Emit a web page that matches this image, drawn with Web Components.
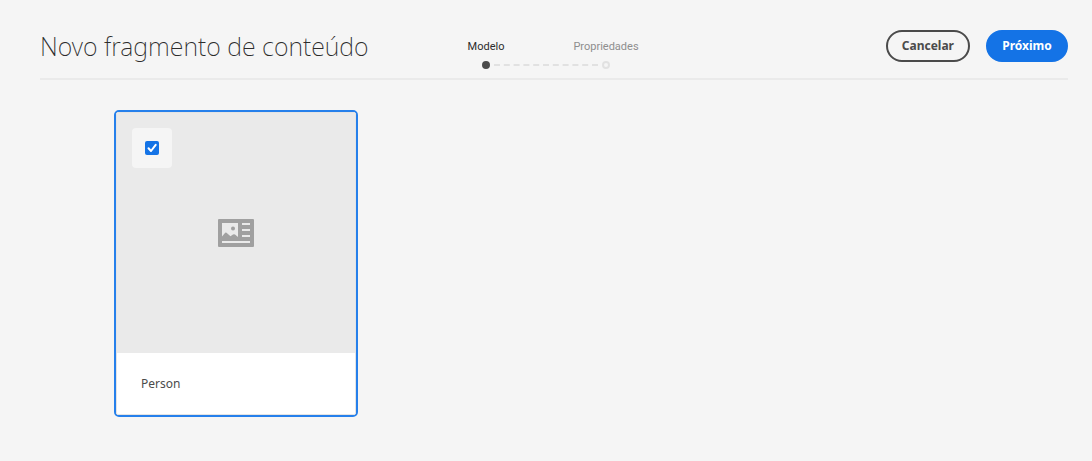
<!DOCTYPE html>
<html lang="pt-BR">
<head>
<meta charset="utf-8">
<meta name="viewport" content="width=device-width, initial-scale=1">
<title>Novo fragmento de conteúdo</title>
<style>
html { background: #f5f5f5; }
body { margin: 0; color: #4b4b4b; font: 12px/16px "Noto Sans", sans-serif; }
</style>
</head>
<body>
<wizard-page></wizard-page>
<script>
const define = (name, html) => customElements.define(name, class extends HTMLElement {
  constructor() {
    super();
    this.attachShadow({ mode: "open" }).innerHTML = html;
  }
});

define("wizard-step", `
<style>
  :host { display: grid; justify-items: center; row-gap: 6px; position: relative; color: #8e8e8e; font: 11px/16px Roboto, sans-serif; }
  :host([current]) { color: #2c2c2c; }
  i { box-sizing: border-box; width: 8px; height: 8px; border-radius: 50%; border: 2px solid #e1e1e1; }
  :host([current]) i { border-color: #4b4b4b; background: #4b4b4b; }
  :host([current])::after { content: ""; position: absolute; bottom: 3px; left: calc(50% + 8px); width: calc(100% - 16px); border-bottom: 2px dashed #e1e1e1; }
</style>
<span><slot></slot></span><i></i>`);

define("wizard-button", `
<style>
  :host { display: block; }
  button { box-sizing: border-box; height: 32px; min-width: 82px; padding: 0 14px; border: 2px solid #4b4b4b; border-radius: 16px; background: transparent; color: #4b4b4b; font: 700 12px/16px "Noto Sans", sans-serif; white-space: nowrap; }
  :host([primary]) button { border-color: #1473e6; background: #1473e6; color: #fff; }
</style>
<button type="button"><slot></slot></button>`);

define("wizard-header", `
<style>
  :host { display: grid; grid-template-columns: minmax(0, 1fr) 256px minmax(0, 1fr); margin: 0 24px 0 40px; padding: 30px 0 9px; border-bottom: 2px solid #eaeaea; }
  h1 { margin: 0; font: 200 25px/32px "Noto Sans", sans-serif; color: #2c2c2c; white-space: nowrap; }
  ol { display: grid; grid-template-columns: 1fr 1fr; margin: 0; padding: 9px 16px 0 0; list-style: none; align-content: start; }
  div { display: flex; justify-content: flex-end; gap: 16px; }
</style>
<h1>Novo fragmento de conteúdo</h1>
<ol>
  <li><wizard-step current>Modelo</wizard-step></li>
  <li><wizard-step>Propriedades</wizard-step></li>
</ol>
<div><wizard-button>Cancelar</wizard-button><wizard-button primary>Próximo</wizard-button></div>`);

define("model-card", `
<style>
  :host { display: block; box-sizing: border-box; width: 244px; border: 2px solid #2680eb; border-radius: 5px; background: #fff; }
  article { border: 1px solid #e4e4e4; border-radius: 2px; }
  .preview { position: relative; display: grid; place-items: center; height: 240px; background: #eaeaea; }
  .pick { position: absolute; top: 15px; left: 15px; display: grid; place-items: center; width: 40px; height: 40px; border-radius: 4px; background: #f5f5f5; }
  .pick > * { grid-area: 1 / 1; }
  input { appearance: none; margin: 0; width: 14px; height: 14px; border-radius: 2px; background: #1473e6; }
  .tick { position: relative; pointer-events: none; visibility: hidden; }
  input:checked + .tick { visibility: visible; }
  h2 { margin: 0; padding: 22px 24px; font: 400 12px/17px "Noto Sans", sans-serif; color: #4b4b4b; }
</style>
<article>
  <div class="preview">
    <label class="pick">
      <input type="checkbox" checked aria-labelledby="name">
      <svg class="tick" width="14" height="14" viewBox="0 0 14 14" aria-hidden="true"><path d="M3.5 7.3 6 10l4.7-6.2" fill="none" stroke="#fff" stroke-width="2" stroke-linecap="round" stroke-linejoin="round"/></svg>
    </label>
    <svg width="36" height="28" viewBox="0 0 36 28" aria-hidden="true">
      <rect width="36" height="28" rx="1" fill="#a0a0a0"/>
      <path d="M4 4h16v14l-3-2.500q-1-.6-2 0l-2.500 1.800-4-3.600q-.7-.6-1.300 0L4 17.500zM24 4h8v2h-8zM24 10h8v2h-8zM24 16h8v2h-8zM4 22h28v2H4z" fill="#eaeaea"/>
      <circle cx="15" cy="9.500" r="2" fill="#a0a0a0"/>
    </svg>
  </div>
  <h2 id="name"><slot></slot></h2>
</article>`);

define("wizard-page", `
<style>
  :host { display: block; }
  main { display: flex; flex-wrap: wrap; gap: 24px; padding: 30px 24px 44px 114px; }
</style>
<wizard-header role="banner"></wizard-header>
<main><model-card>Person</model-card></main>`);
</script>
</body>
</html>
